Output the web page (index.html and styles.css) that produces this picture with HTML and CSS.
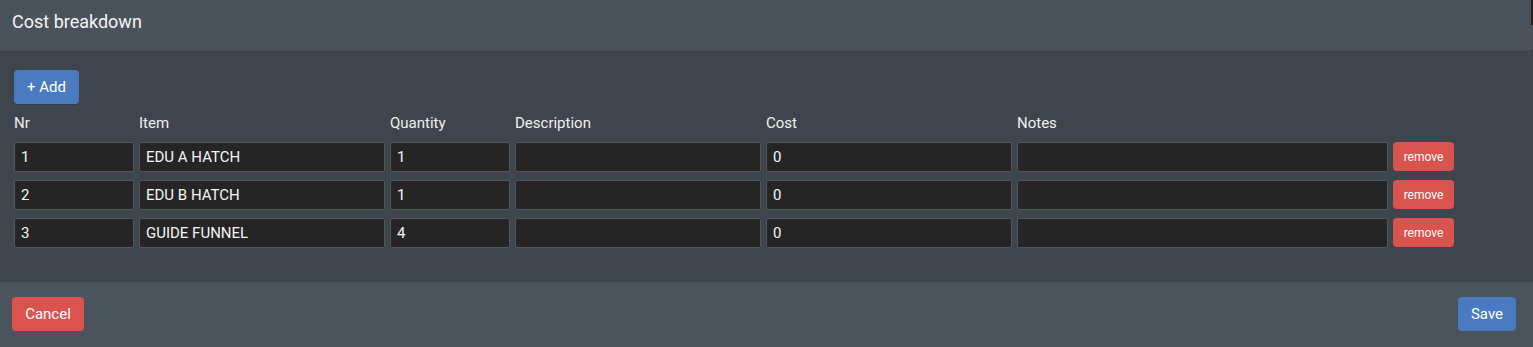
FILE: index.html
```html
<!DOCTYPE html>
<html>
<head>
<meta charset="utf-8">
<link rel="stylesheet" href="styles.css">
</head>
<body>
<div class="page">
  <div class="modal">
    <div class="modal-header">Cost breakdown</div>
    <div class="modal-body">
      <button class="btn btn-blue btn-add">+ Add</button>
      <div class="grid">
        <div class="label">Nr</div>
        <div class="label">Item</div>
        <div class="label">Quantity</div>
        <div class="label">Description</div>
        <div class="label">Cost</div>
        <div class="label">Notes</div>
        <div></div>

        <div class="input">1</div>
        <div class="input">EDU A HATCH</div>
        <div class="input">1</div>
        <div class="input"></div>
        <div class="input">0</div>
        <div class="input"></div>
        <button class="btn btn-red btn-remove">remove</button>

        <div class="input">2</div>
        <div class="input">EDU B HATCH</div>
        <div class="input">1</div>
        <div class="input"></div>
        <div class="input">0</div>
        <div class="input"></div>
        <button class="btn btn-red btn-remove">remove</button>

        <div class="input">3</div>
        <div class="input">GUIDE FUNNEL</div>
        <div class="input">4</div>
        <div class="input"></div>
        <div class="input">0</div>
        <div class="input"></div>
        <button class="btn btn-red btn-remove">remove</button>
      </div>
    </div>
    <div class="modal-footer">
      <button class="btn btn-red btn-cancel">Cancel</button>
      <button class="btn btn-blue btn-save">Save</button>
    </div>
  </div>
  <div class="edge"></div>
</div>
</body>
</html>
```

FILE: styles.css
```css
html, body {
  margin: 0;
  padding: 0;
  background: #3a4047;
}
body {
  font-family: Roboto, "Liberation Sans", Arial, sans-serif;
  color: #f2f2f2;
}
.page {
  display: flex;
  width: 1533px;
  height: 347px;
  overflow: hidden;
}
.modal {
  width: 1531px;
  display: flex;
  flex-direction: column;
}
.edge {
  width: 2px;
  background: linear-gradient(#1e2124 0 25px, #4a5057 25px 50px, #2a2e33 50px 51px, #3f454c 51px 282px, #4b535c 282px);
}
.modal-header {
  height: 51px;
  box-sizing: border-box;
  background: #4a525b;
  padding: 10px 12px 0;
  font-size: 18px;
  line-height: 24px;
  color: #f5f5f5;
}
.modal-body {
  background: #3e454c;
  padding: 19px 14px 34px;
  display: flex;
  flex-direction: column;
  align-items: flex-start;
}
.btn {
  font-family: Roboto, "Liberation Sans", Arial, sans-serif;
  border: none;
  border-radius: 4px;
  color: #ffffff;
  font-size: 15px;
  padding: 0;
  cursor: pointer;
}
.btn-blue {
  background: #4a7bc1;
}
.btn-red {
  background: #d9534f;
}
.btn-add {
  width: 65px;
  height: 34px;
  margin-bottom: 9px;
  box-shadow: 0 1px 1px rgba(0,0,0,0.15);
}
.grid {
  display: grid;
  grid-template-columns: 120px 246px 120px 246px 246px 371px 61px;
  grid-auto-rows: 30px;
  grid-template-rows: 21px;
  column-gap: 5px;
  row-gap: 8px;
}
.label {
  font-size: 15px;
  line-height: 21px;
  color: #f0f0f0;
}
.input {
  box-sizing: border-box;
  height: 30px;
  background: #252525;
  border: 1px solid #51565c;
  border-radius: 2px;
  padding: 0 6px;
  font-size: 15px;
  line-height: 28px;
  color: #f5f5f5;
  white-space: nowrap;
  overflow: hidden;
}
.btn-remove {
  height: 29px;
  width: 61px;
  font-size: 12px;
}
.modal-footer {
  flex: 1;
  background: #4b535c;
  padding: 15px 15px 0 12px;
  display: flex;
  justify-content: space-between;
  align-items: flex-start;
}
.btn-cancel {
  width: 72px;
  height: 34px;
}
.btn-save {
  width: 58px;
  height: 34px;
}
```
